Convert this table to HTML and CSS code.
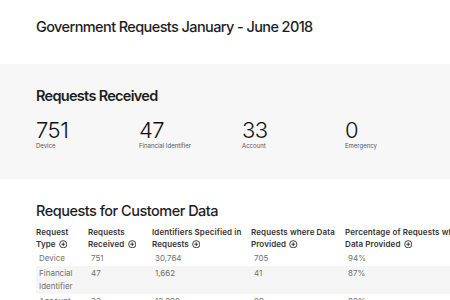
FILE: index.html
```html
<!DOCTYPE html>
<html>
<head>
<meta charset="utf-8">
<link rel="stylesheet" href="styles.css">
</head>
<body>
<header class="top">
  <h1 class="page-title">Government Requests January - June 2018</h1>
</header>
<section class="received">
  <h2 class="section-title">Requests Received</h2>
  <div class="stats">
    <div class="stat"><div class="stat-num">751</div><div class="stat-label">Device</div></div>
    <div class="stat"><div class="stat-num">47</div><div class="stat-label">Financial Identifier</div></div>
    <div class="stat"><div class="stat-num">33</div><div class="stat-label">Account</div></div>
    <div class="stat"><div class="stat-num">0</div><div class="stat-label">Emergency</div></div>
  </div>
</section>
<section class="customer">
  <h2 class="section-title">Requests for Customer Data</h2>
  <table class="data">
    <colgroup>
      <col class="c1"><col class="c2"><col class="c3"><col class="c4"><col class="c5">
    </colgroup>
    <thead>
      <tr>
        <th>Request Type <svg class="plus" viewBox="0 0 8 8"><circle cx="4" cy="4" r="3.4"/><path d="M4 2.2V5.8M2.2 4H5.8"/></svg></th>
        <th>Requests Received <svg class="plus" viewBox="0 0 8 8"><circle cx="4" cy="4" r="3.4"/><path d="M4 2.2V5.8M2.2 4H5.8"/></svg></th>
        <th>Identifiers Specified in Requests <svg class="plus" viewBox="0 0 8 8"><circle cx="4" cy="4" r="3.4"/><path d="M4 2.2V5.8M2.2 4H5.8"/></svg></th>
        <th>Requests where Data Provided <svg class="plus" viewBox="0 0 8 8"><circle cx="4" cy="4" r="3.4"/><path d="M4 2.2V5.8M2.2 4H5.8"/></svg></th>
        <th>Percentage of Requests where Data Provided <svg class="plus" viewBox="0 0 8 8"><circle cx="4" cy="4" r="3.4"/><path d="M4 2.2V5.8M2.2 4H5.8"/></svg></th>
      </tr>
    </thead>
    <tbody>
      <tr><td>Device</td><td>751</td><td>30,764</td><td>705</td><td>94%</td></tr>
      <tr class="alt"><td>Financial Identifier</td><td>47</td><td>1,662</td><td>41</td><td>87%</td></tr>
      <tr><td>Account</td><td>33</td><td>13,898</td><td>29</td><td>88%</td></tr>
    </tbody>
  </table>
</section>
</body>
</html>
```

FILE: styles.css
```css
html, body {
  margin: 0;
  padding: 0;
  background: #fff;
  overflow: hidden;
}
body {
  font-family: Inter, "Noto Sans", sans-serif;
  color: #1d1d1f;
  width: 450px;
  height: 300px;
}
.top {
  height: 64px;
  padding-left: 36px;
  box-sizing: border-box;
  padding-top: 17px;
}
.page-title {
  margin: 0;
  font-size: 14.5px;
  font-weight: 500;
  line-height: 20px;
  letter-spacing: -0.6px;
}
.received {
  background: #f7f7f7;
  height: 115px;
  box-sizing: border-box;
  padding: 22px 0 0 36px;
}
.section-title {
  margin: 0;
  font-size: 14.5px;
  font-weight: 600;
  line-height: 20px;
  letter-spacing: -0.7px;
}
.stats {
  display: flex;
  margin-top: 13px;
}
.stat {
  width: 103px;
  flex: none;
}
.stat-num {
  font-size: 22px;
  font-weight: 300;
  line-height: 22px;
  color: #111;
  letter-spacing: -0.5px;
}
.stat-label {
  font-size: 6px;
  color: #555;
  line-height: 8px;
  margin-top: 1px;
}
.customer {
  padding: 22px 0 0 36px;
}
.customer .section-title {
  font-weight: 500;
  letter-spacing: -0.5px;
}
.data {
  border-collapse: collapse;
  table-layout: fixed;
  width: 440px;
  margin-top: 6px;
  font-size: 8px;
}
.c1 { width: 52px; }
.c2 { width: 64px; }
.c3 { width: 99px; }
.c4 { width: 94px; }
.c5 { width: 131px; }
.data th {
  text-align: left;
  vertical-align: top;
  font-weight: 600;
  color: #333;
  line-height: 11.5px;
  padding: 0 8px 1px 0;
  letter-spacing: 0.1px;
}
.plus {
  display: inline-block;
  width: 8.5px;
  height: 8.5px;
  vertical-align: -1.5px;
  margin-left: 1px;
  fill: none;
  stroke: #333;
  stroke-width: 0.9;
}
.data td {
  vertical-align: top;
  color: #707070;
  line-height: 13px;
  padding: 1px 6px 1px 3px;
}
.data tr.alt td {
  background: #f5f5f5;
}
```
